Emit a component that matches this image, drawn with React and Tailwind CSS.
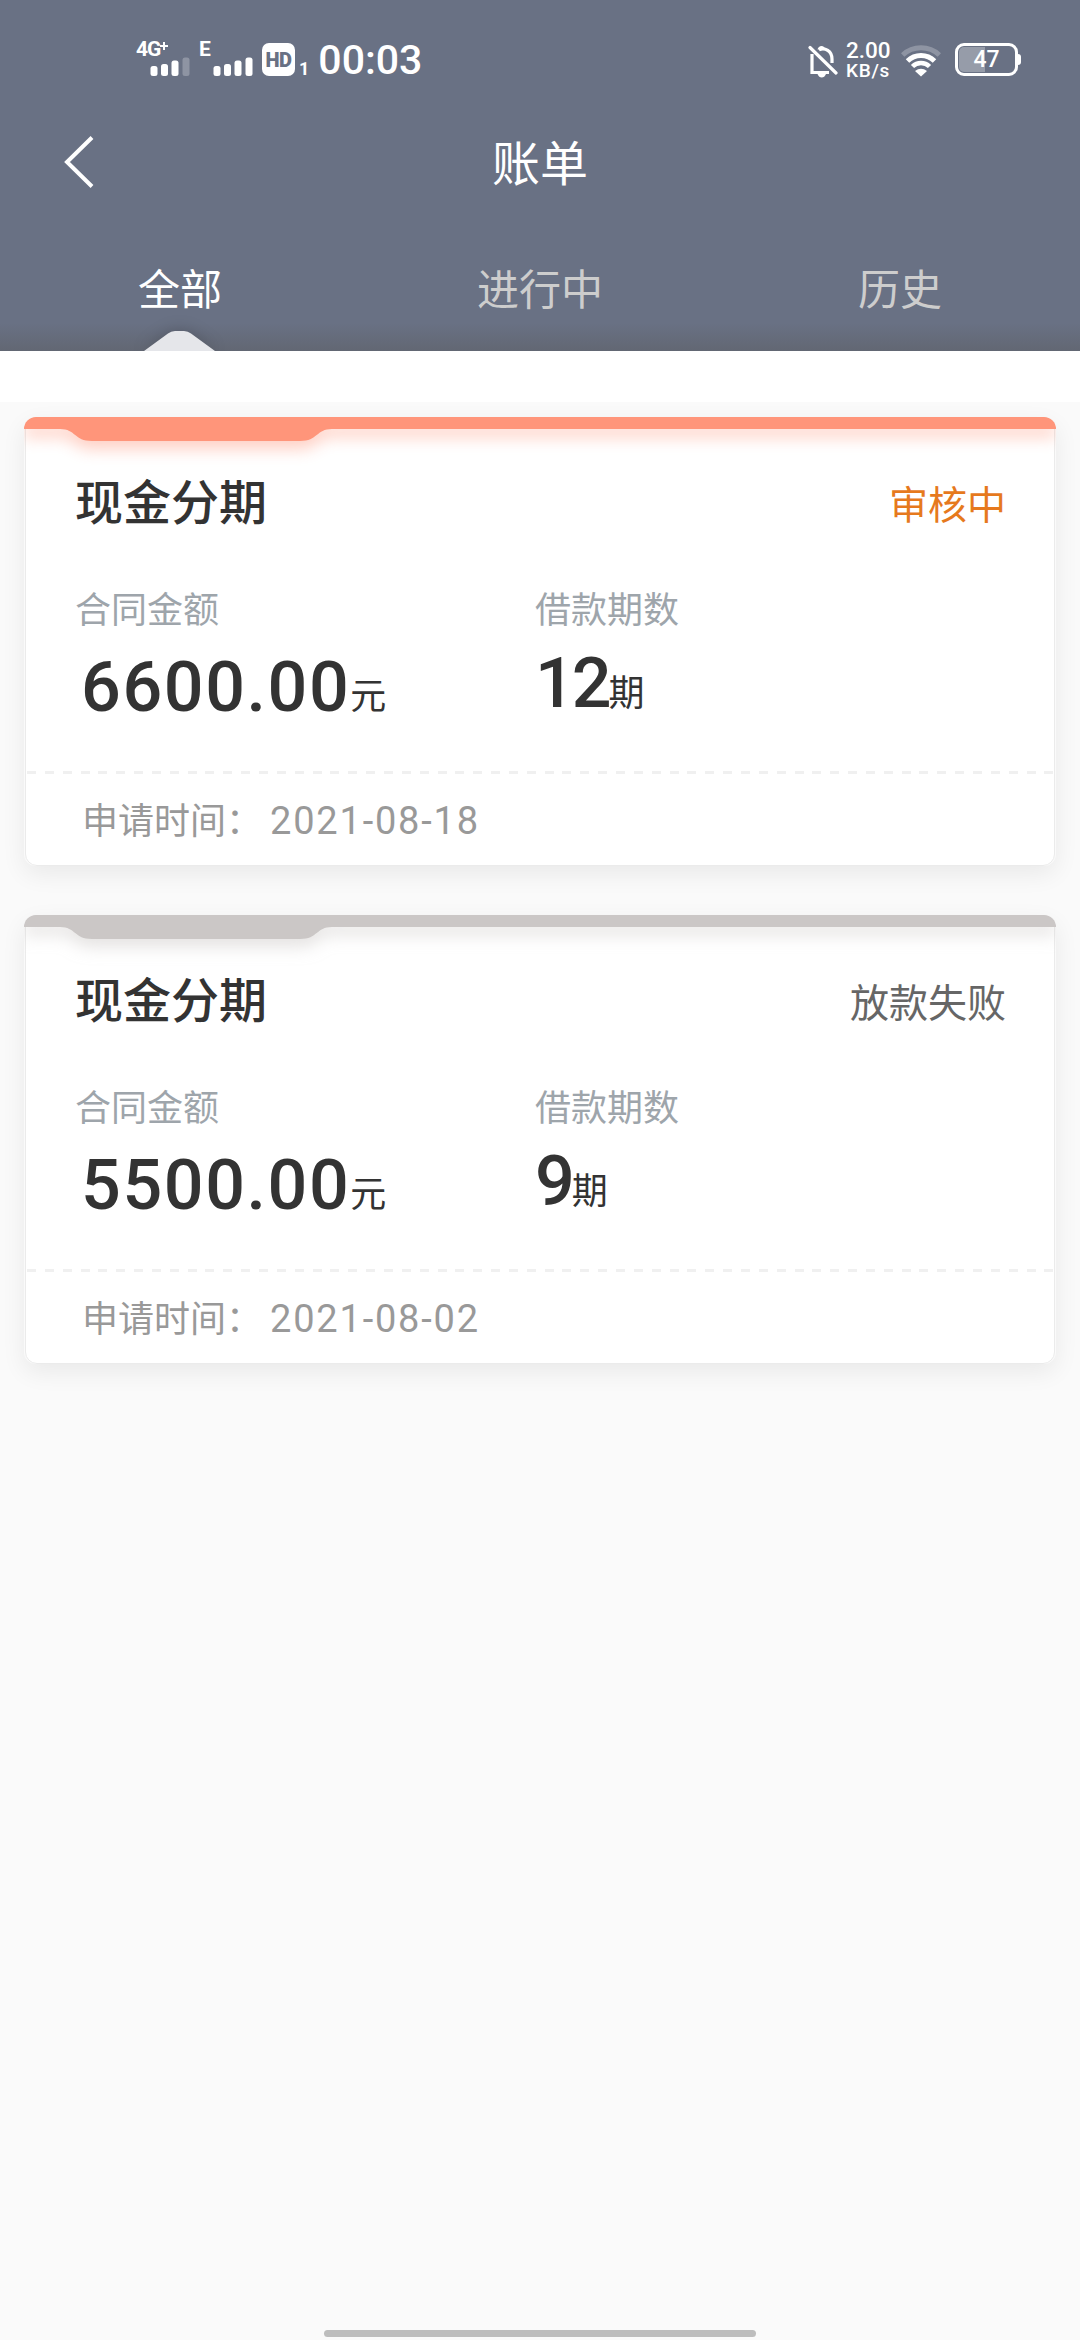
import React, { useState } from "react";

const tabs = ["全部", "进行中", "历史"];

const bills = [
  {
    id: 1,
    title: "现金分期",
    status: "审核中",
    amount: "6600.00",
    periods: "12",
    date: "2021-08-18",
    active: true,
  },
  {
    id: 2,
    title: "现金分期",
    status: "放款失败",
    amount: "5500.00",
    periods: "9",
    date: "2021-08-02",
    active: false,
  },
];

function Signal({ label, plus, weak }) {
  return (
    <div className="relative w-[54px] h-[34px]">
      <span className="absolute left-0 -top-px text-[21px] leading-[16px] font-bold tracking-[-1px]">
        {label}
      </span>
      {plus && (
        <svg className="absolute left-[24px] top-0" width="8" height="8" viewBox="0 0 8 8" stroke="#fff" strokeWidth="2">
          <path d="M4 0V8M0 4H8" />
        </svg>
      )}
      <svg className="absolute right-0 bottom-0" width="40" height="19" viewBox="0 0 40 19" fill="#fff">
        <rect x="0.5" y="9" width="7" height="10" rx="2.5" />
        <rect x="11" y="7" width="7" height="12" rx="2.5" />
        <rect x="21.5" y="3.5" width="7" height="15.5" rx="2.5" />
        <rect x="32.5" y="0.5" width="7" height="18.5" rx="2.5" opacity={weak ? 0.25 : 1} />
      </svg>
    </div>
  );
}

function StatusBar() {
  return (
    <div className="flex items-start justify-between h-[120px] pt-[42px] pl-[136px] pr-[59px] font-[Roboto,sans-serif] text-white">
      <div className="flex items-start">
        <Signal label="4G" plus weak />
        <div className="ml-[9px]">
          <Signal label="E" />
        </div>
        <div className="ml-[9px] mt-[1px] w-[33px] h-[33px] rounded-[7px] bg-white flex items-center justify-center">
          <span className="text-[#697184] text-[20px] leading-[20px] font-black tracking-[-0.5px]">HD</span>
        </div>
        <span className="ml-[4px] mt-[18px] text-[18px] leading-[17px] font-bold">1</span>
        <span className="ml-[9px] -mt-[2px] text-[41px] leading-[40px] font-medium">00:03</span>
      </div>

      <div className="flex items-start">
        {/* Muted bell */}
        <svg className="mt-[3px]" width="30" height="33" viewBox="0 0 30 33" fill="none" stroke="#fff" strokeWidth="3.2">
          <path d="M4 9V27.500H21" />
          <path d="M11 4.800C17 2 24 6 24 14V18" />
          <path d="M9.500 4.500Q10.500 1 13.500 1Q16.500 1 17.500 4.500Z" fill="#fff" stroke="none" />
          <path d="M2 2.500L28 28" strokeLinecap="round" />
          <path d="M9.500 29H18Q16.500 32.500 13.700 32.500Q11 32.500 9.500 29Z" fill="#fff" stroke="none" />
        </svg>
        <div className="ml-[8px] w-[45px] flex flex-col">
          <span className="-mt-[5px] text-[22.5px] leading-[27px] font-medium">2.00</span>
          <span className="-mt-[2px] text-[19px] leading-[18px] font-medium tracking-[0.7px]">KB/s</span>
        </div>
        <svg className="ml-[10px] mt-[3px]" width="40" height="32" viewBox="0 0 40 32" fill="none" stroke="#fff" strokeWidth="5">
          <path d="M1.700 10A27 27 0 0 1 38.300 10" opacity="0.25" />
          <path d="M6.500 16A19.500 19.500 0 0 1 33.500 16" />
          <path d="M11.500 21.500A12 12 0 0 1 28.500 21.500" strokeWidth="4.5" />
          <path d="M14 26Q20 21.500 26 26L20 31.500Z" fill="#fff" stroke="none" />
        </svg>
        <div className="ml-[14px] mt-[1px] flex items-center">
          <div className="relative w-[63px] h-[33px] rounded-[9px] border-[3px] border-white">
            <div className="absolute left-[1px] top-[1px] bottom-[1px] w-[26px] rounded-l-[5px] bg-white/30" />
            <span className="absolute inset-0 flex items-center justify-center text-[23px] leading-[23px] font-medium">47</span>
          </div>
          <div className="w-[3px] h-[11px] rounded-r-[3px] bg-white" />
        </div>
      </div>
    </div>
  );
}

function BillCard({ bill }) {
  return (
    <div className="relative h-[449px] rounded-[12px] shadow-[0_8px_24px_rgba(0,0,0,0.07)]">
      <div className="h-full mx-[1px] rounded-[12px] border border-[#ebebeb] bg-white flex flex-col">
        <div className="flex justify-between items-start pt-[49px] pl-[49px] pr-[48px] h-[167px]">
          <h2 className="text-[48px] leading-[64px] font-medium text-[#333]">{bill.title}</h2>
          <span
            className={`mt-[3px] text-[39px] leading-[64px] ${
              bill.active ? "text-[#e6791d]" : "text-[#666]"
            }`}
          >
            {bill.status}
          </span>
        </div>

        <div className="flex pl-[49px] h-[186px]">
          <div className="w-[460px]">
            <p className="text-[36px] leading-[44px] text-[#9ea5ab]">合同金额</p>
            <p className="mt-[18px] ml-[6px] leading-[80px] font-[Roboto,'Noto_Sans_CJK_SC',sans-serif] text-[70px] font-medium tracking-[1.6px] text-[#333]">
              {bill.amount}
              <span className="relative -top-[2px] text-[36px] tracking-normal font-normal">元</span>
            </p>
          </div>
          <div>
            <p className="text-[36px] leading-[44px] text-[#9ea5ab]">借款期数</p>
            <p className="mt-[14px] leading-[80px] font-[Roboto,'Noto_Sans_CJK_SC',sans-serif] text-[70px] font-medium tracking-[-3px] text-[#333]">
              {bill.periods}
              <span className="relative -top-px text-[36px] tracking-normal font-normal">期</span>
            </p>
          </div>
        </div>

        <div className="mx-[1px] h-[3px] bg-[repeating-linear-gradient(90deg,#f0f0f0_0_9px,transparent_9px_17.85px)]" />

        <div className="flex pl-[56px] pt-[21px] text-[36px] leading-[46px] text-[#999]">
          <span>申请时间：</span>
          <span className="ml-[8px] mt-[3px] font-[Roboto,sans-serif] text-[38px] tracking-[1.8px]">{bill.date}</span>
        </div>
      </div>

      {/* Coloured strip with the folder tab */}
      <div className="absolute inset-x-0 top-0 h-[64px] overflow-hidden rounded-t-[12px]">
        <svg
          className={
            bill.active
              ? "overflow-visible text-[#ff957a] drop-shadow-[0_8px_8px_rgba(255,149,122,0.45)]"
              : "overflow-visible text-[#cbc7c6] drop-shadow-[0_8px_8px_rgba(203,199,198,0.5)]"
          }
          width="1032"
          height="24"
          viewBox="0 0 1032 24"
          fill="currentColor"
        >
          <path d="M0 0H1032V12H308C292 12 294 24 276 24H68C50 24 52 12 36 12H0Z" />
        </svg>
      </div>
    </div>
  );
}

function App() {
  const [activeTab, setActiveTab] = useState(0);

  return (
    <div className="relative w-[1080px] h-[2340px] overflow-hidden bg-[#fafafa] font-['Noto_Sans_CJK_SC',sans-serif]">
      {/* Header */}
      <header className="relative h-[351px] overflow-hidden bg-[#697184]">
        <div className="absolute inset-x-0 bottom-0 h-[28px] bg-linear-to-b from-transparent to-[#5b5d62]/50" />
        <StatusBar />
        <div className="flex items-center h-[80px] px-[64px]">
          <svg className="relative top-[2px]" width="30" height="52" viewBox="0 0 30 52" fill="none" stroke="#fff" strokeWidth="4">
            <path d="M28 1.500L3 26L28 50.500" />
          </svg>
          <h1 className="flex-1 mr-[30px] text-center text-[48px] leading-[64px] text-white">账单</h1>
        </div>
        <div className="grid grid-cols-3 pt-[57px]">
          {tabs.map((tab, i) => (
            <button
              key={tab}
              onClick={() => setActiveTab(i)}
              className={`relative h-[94px] pb-[34px] text-[42px] leading-[60px] ${
                i === activeTab ? "text-white" : "text-[#cdcdcd]"
              }`}
            >
              {tab}
              {i === activeTab && (
                <svg
                  className="absolute bottom-0 left-[144px] drop-shadow-[0_0_8px_rgba(0,0,0,0.2)]"
                  width="72"
                  height="20"
                  viewBox="0 0 72 20"
                >
                  <path d="M0 20L24 2.500Q27 0 31 0H40Q44 0 47 2.500L71 20Z" fill="#e5e6ea" />
                </svg>
              )}
            </button>
          ))}
        </div>
      </header>

      <div className="h-[51px] bg-white" />

      {/* Bill list */}
      <main className="flex flex-col gap-[49px] px-[24px] pt-[15px]">
        {bills.map((bill) => (
          <BillCard key={bill.id} bill={bill} />
        ))}
      </main>

      {/* Home indicator */}
      <div className="absolute left-[324px] bottom-[3px] w-[432px] h-[7px] rounded-full bg-[#bdbdbd]" />
    </div>
  );
}

export default App;
